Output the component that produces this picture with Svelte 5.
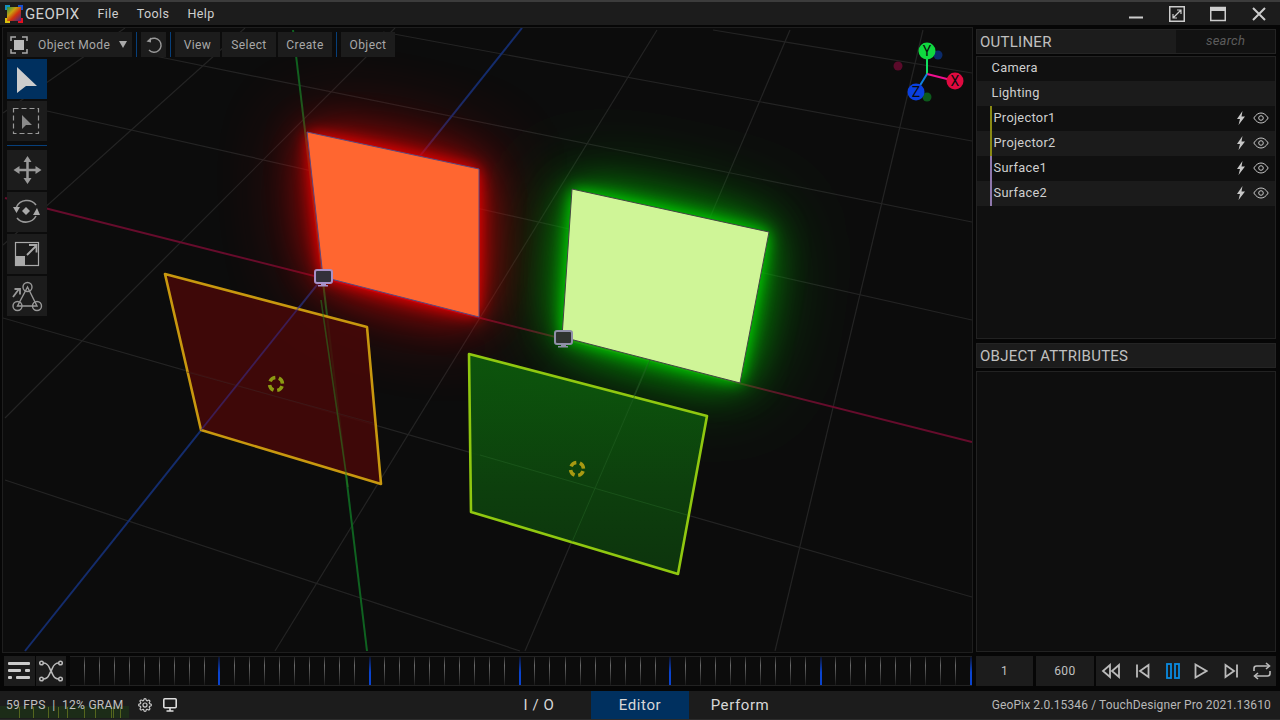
<script>
const gridLines = [
  [713,30,972,73],[383,32,972,141],[150,55,972,222],[47,111,972,320],
  [3,318,972,597],[5,480,520,651],
  [923,30,775,651],[790,30,525,651],[657,30,275,651],[395,28,5,418],[245,28,3,245],[125,28,3,113]
]
const rows = [
  { name: "Camera", group: true },
  { name: "Lighting", group: true },
  { name: "Projector1", bar: "#8a8a14" },
  { name: "Projector2", bar: "#8a8a14" },
  { name: "Surface1", bar: "#8f78ad" },
  { name: "Surface2", bar: "#8f78ad" }
]
const ticks = Array.from({ length: 60 }, (_, i) => i)
const fpsTicks = [19, 33, 48, 58, 67, 84, 95, 111, 113, 120]
</script>

<div class="app">
  <header class="titlebar">
    <svg class="logo" width="18" height="18" viewBox="0 0 18 18">
      <defs>
        <linearGradient id="lg" x1="0" y1="0" x2="1" y2="1">
          <stop offset="0" stop-color="#1f8f4a" />
          <stop offset=".35" stop-color="#c8a010" />
          <stop offset=".6" stop-color="#d03010" />
          <stop offset="1" stop-color="#3a2a8a" />
        </linearGradient>
      </defs>
      <rect x="2" y="2" width="14" height="14" fill="url(#lg)" />
      <path d="M1 5V1h4" fill="none" stroke="#1590c0" stroke-width="2" />
      <path d="M13 1h4v4" fill="none" stroke="#1c50d0" stroke-width="2" />
      <path d="M1 13v4h4" fill="none" stroke="#d8c010" stroke-width="2" />
      <path d="M13 17h4v-4" fill="none" stroke="#e01020" stroke-width="2" />
    </svg>
    <span class="brand">GEOPIX</span>
    <nav class="menu">
      <span>File</span>
      <span>Tools</span>
      <span>Help</span>
    </nav>
    <div class="winbtns">
      <svg width="16" height="16" viewBox="0 0 16 16"><path d="M1 11.500h14" stroke="#ccc" stroke-width="2" /></svg>
      <svg width="16" height="16" viewBox="0 0 16 16" fill="none" stroke="#ccc"><rect x=".75" y=".75" width="14.5" height="14.5" stroke-width="1.5" /><path d="M4 12l8-8M8 4h4v4M4 8v4h4" stroke-width="1.2" /></svg>
      <svg width="16" height="16" viewBox="0 0 16 16" fill="none" stroke="#ccc"><rect x=".75" y="1.5" width="14.5" height="13" stroke-width="1.5" /><path d="M1 3.5h14" stroke-width="3" /></svg>
      <svg width="16" height="16" viewBox="0 0 16 16"><path d="M2 2l12 12M14 2L2 14" stroke="#ccc" stroke-width="2" /></svg>
    </div>
  </header>

  <main class="main">
    <section class="viewport">
      <svg class="scene" viewBox="3 28 969 624" width="969" height="624">
        <defs>
          <filter id="b6" x="-50%" y="-50%" width="200%" height="200%"><feGaussianBlur stdDeviation="8" /></filter>
          <filter id="b18" x="-60%" y="-60%" width="220%" height="220%"><feGaussianBlur stdDeviation="22" /></filter>
          <filter id="b40" x="-100%" y="-100%" width="300%" height="300%"><feGaussianBlur stdDeviation="44" /></filter>
          <linearGradient id="greenFill" x1="0" y1="0" x2="0" y2="1">
            <stop offset="0" stop-color="#0c620c" stop-opacity=".85" />
            <stop offset=".6" stop-color="#0d420d" stop-opacity=".95" />
            <stop offset="1" stop-color="#0d350d" stop-opacity=".97" />
          </linearGradient>
        </defs>
        <rect x="3" y="28" width="969" height="624" fill="#0c0c0c" />

        {#each gridLines as l}
          <line x1={l[0]} y1={l[1]} x2={l[2]} y2={l[3]} stroke="#242424" stroke-width="1.2" />
        {/each}
        <line x1="5" y1="198" x2="972" y2="442" stroke="#660c2c" stroke-width="2" />
        <line x1="522" y1="28" x2="25" y2="651" stroke="#142c6c" stroke-width="2" />
        <line x1="293" y1="30" x2="367" y2="651" stroke="#0f6220" stroke-width="2" />

        <polygon points="307,132 479,169 479,317 323,277" fill="#a00000" opacity=".9" filter="url(#b40)" />
        <polygon points="307,132 479,169 479,317 323,277" fill="#ff0000" opacity=".7" filter="url(#b18)" />
        <polygon points="307,132 479,169 479,317 323,277" fill="#ff0808" filter="url(#b6)" />
        <polygon points="572,189 769,232 740,383 562,337" fill="#007a00" opacity="1" filter="url(#b40)" />
        <polygon points="572,189 769,232 740,383 562,337" fill="#00c000" opacity=".9" filter="url(#b18)" />
        <polygon points="572,189 769,232 740,383 562,337" fill="#10e010" filter="url(#b6)" />

        <polygon points="165,274 367,327 381,484 201,430" fill="#480808" fill-opacity=".85" stroke="#c8980f" stroke-width="2.6" stroke-linejoin="round" />
        <polygon points="469,354 707,416 678,574 471,512" fill="url(#greenFill)" stroke="#90c810" stroke-width="2.6" stroke-linejoin="round" />
        <g opacity=".55">
          <line x1="187" y1="372" x2="373" y2="423" stroke="#3a2222" />
          <line x1="321" y1="300" x2="348" y2="487" stroke="#2a7a20" stroke-width="1.6" />
          <line x1="300" y1="306" x2="201" y2="430" stroke="#3a2a88" stroke-width="1.6" />
          <line x1="480" y1="455" x2="687" y2="515" stroke="#226022" />
          <line x1="650" y1="360" x2="572" y2="542" stroke="#226022" />
        </g>

        <polygon points="307,132 479,169 479,317 323,277" fill="#ff6630" stroke="#5a4a80" stroke-width="1" />
        <polygon points="572,189 769,232 740,383 562,337" fill="#cff597" stroke="#444" stroke-width="1" />

        <circle cx="276" cy="384" r="6.500" fill="none" stroke="#8c9a12" stroke-width="3.500" stroke-dasharray="6.500 3.700" transform="rotate(20 276 384)" />
        <circle cx="577" cy="469" r="6.500" fill="none" stroke="#a89a12" stroke-width="3.500" stroke-dasharray="6.500 3.700" transform="rotate(20 577 469)" />

        <g fill="#a890c8">
          <rect x="315" y="270" width="17" height="13" rx="2" fill="#33303a" stroke="#a890c8" stroke-width="2" />
          <rect x="321" y="283" width="5" height="2" />
          <rect x="318" y="285" width="10" height="1.5" />
        </g>
        <g fill="#8f8fa8">
          <rect x="555" y="331" width="17" height="13" rx="2" fill="#2f3430" stroke="#8f8fa8" stroke-width="2" />
          <rect x="561" y="344" width="5" height="2" />
          <rect x="558" y="346" width="10" height="1.5" />
        </g>

        <circle cx="938" cy="55" r="4.5" fill="#0a2a6a" />
        <circle cx="898" cy="66" r="4.5" fill="#5a0a2a" />
        <circle cx="927" cy="97" r="4.5" fill="#0c5a1c" />
        <line x1="927" y1="74" x2="927" y2="52" stroke="#10e060" stroke-width="2" />
        <line x1="927" y1="74" x2="955" y2="81" stroke="#f01090" stroke-width="2" />
        <line x1="927" y1="74" x2="916" y2="92" stroke="#1080e0" stroke-width="2" />
        <circle cx="927" cy="51" r="8.5" fill="#10d840" />
        <circle cx="955" cy="81" r="8.5" fill="#e00a40" />
        <circle cx="916" cy="92" r="8.5" fill="#0a40e0" />
        <g class="axis-label">
          <text x="927" y="56">Y</text>
          <text x="955" y="86">X</text>
          <text x="916" y="97">Z</text>
        </g>
      </svg>

      <div class="toolbar">
        <div class="tbtn mode">
          <svg width="18" height="18" viewBox="0 0 18 18" fill="none" stroke="#aaa" stroke-width="1.5"><rect x="4" y="4" width="10" height="10" fill="#bbb" stroke="none" /><path d="M1 5V1h5M12 1h5v4M17 13v4h-5M6 17H1v-4" /></svg>
          <span class="mode-label">Object Mode</span>
          <svg width="8" height="7" viewBox="0 0 8 7"><path d="M0 0h8L4 7z" fill="#aaa" /></svg>
        </div>
        <i class="sep"></i>
        <div class="tbtn undo">
          <svg width="18" height="18" viewBox="0 0 18 18" fill="none" stroke="#999" stroke-width="1.4"><path d="M5 3.5a7 7 0 1 1-1 10.5" /><path d="M1.5 5.5L6 1.5v5z" fill="#999" stroke="none" /></svg>
        </div>
        <i class="sep"></i>
        <div class="tbtn view">View</div>
        <div class="tbtn sel">Select</div>
        <div class="tbtn sel">Create</div>
        <i class="sep"></i>
        <div class="tbtn sel">Object</div>
      </div>

      <div class="tools">
        <div class="tool active">
          <svg width="40" height="40" viewBox="0 0 40 40"><path d="M10 8l20 19H19l-9 7z" fill="#ccc" /></svg>
        </div>
        <div class="tool">
          <svg width="40" height="40" viewBox="0 0 40 40"><rect x="6.5" y="7.5" width="25" height="25" fill="none" stroke="#999" stroke-width="1.2" stroke-dasharray="5 3" /><path d="M15 14l10 10h-6l-4 4z" fill="#8a8a8a" /></svg>
        </div>
        <i class="hsep"></i>
        <div class="tool">
          <svg width="40" height="40" viewBox="0 0 40 40" fill="#999"><path d="M20.500 10v20M10 20h21" stroke="#999" stroke-width="2.500" /><path d="M20.500 6l4 6h-8zM20.500 34l4-6h-8zM6.500 20l6-4v8zM34.500 20l-6-4v8z" /></svg>
        </div>
        <div class="tool">
          <svg width="40" height="40" viewBox="0 0 40 40"><path d="M9.500 15A11.500 11.500 0 0 1 29 13M29 24A11.500 11.500 0 0 1 10 26" fill="none" stroke="#999" stroke-width="1.600" /><path d="M19 15l4 4-4 4-4-4zM6 15h7l-3.500 6zM26 23h7l-3-7z" fill="#aaa" /></svg>
        </div>
        <div class="tool">
          <svg width="40" height="40" viewBox="0 0 40 40"><rect x="8.5" y="8.5" width="23" height="23" fill="none" stroke="#aaa" stroke-width="1.2" /><rect x="8" y="22" width="10" height="10" fill="#aaa" /><path d="M20 21l9-9M22 11h7.5v7.5" fill="none" stroke="#aaa" stroke-width="1.8" /></svg>
        </div>
        <div class="tool">
          <svg width="40" height="40" viewBox="0 0 40 40" fill="none" stroke="#999" stroke-width="1.4"><path d="M20.500 11L10.500 30H30z" /><circle cx="20.500" cy="11" r="4.500" /><circle cx="10.500" cy="30" r="4.500" /><circle cx="30" cy="30" r="4.500" /><path d="M6 21l6-8M7.500 13H13v5.500" stroke-width="1.800" /></svg>
        </div>
      </div>
    </section>

    <aside class="side">
      <div class="panel-head">
        <span>OUTLINER</span>
        <span class="search">search</span>
      </div>
      <ul class="tree">
        {#each rows as r}
          <li class="row" class:group={r.group}>
            {#if r.bar}<i class="bar" style="background:{r.bar}"></i>{/if}
            <span class="row-name">{r.name}</span>
            {#if r.bar}
              <svg width="10" height="14" viewBox="0 0 10 14"><path d="M6.500 0L1 8h3L2.500 14 9 5.500H5.500z" fill="#c8c8c8" /></svg>
              <svg width="16" height="12" viewBox="0 0 16 12" fill="none" stroke="#c8c8c8"><path d="M.8 6C3 2.500 5.500 1 8 1s5 1.500 7.200 5C13 9.500 10.500 11 8 11S3 9.500.8 6z" /><circle cx="8" cy="6" r="2.300" /></svg>
            {/if}
          </li>
        {/each}
      </ul>
      <div class="panel-head attr"><span>OBJECT ATTRIBUTES</span></div>
      <div class="attrs"></div>
    </aside>
  </main>

  <section class="timeline">
    <div class="tl-btn">
      <svg width="24" height="18" viewBox="0 0 24 18" fill="#ccc"><rect width="22" height="3" rx="1" /><rect y="7" width="13" height="3" rx="1" /><rect x="17" y="7" width="5" height="3" rx="1" /><rect y="14" width="4" height="3" rx="1" /><rect x="8" y="14" width="14" height="3" rx="1" /></svg>
    </div>
    <div class="tl-btn second">
      <svg width="24" height="22" viewBox="0 0 24 22" fill="none" stroke="#bbb" stroke-width="1.500"><path d="M4 3c6 0 6 5 8 8s2 8 8 8M20 3c-6 0-6 5-8 8s-2 8-8 8" /><circle cx="2.500" cy="3" r="1.800" /><circle cx="21.500" cy="3" r="1.800" /><circle cx="2.500" cy="19" r="1.800" /><circle cx="21.500" cy="19" r="1.800" /></svg>
    </div>
    <div class="ruler">
      {#each ticks as t}
        <div class="slot"><i class="tick" class:major={t % 10 === 9}></i></div>
      {/each}
    </div>
    <div class="field first">1</div>
    <div class="field">600</div>
    <div class="transport">
      <svg width="20" height="16" viewBox="0 0 20 16" fill="none" stroke="#bbb" stroke-width="1.800"><path d="M9 2L2 8l7 6zM18 2l-7 6 7 6z" /></svg>
      <svg width="16" height="16" viewBox="0 0 16 16" fill="none" stroke="#bbb" stroke-width="1.800"><path d="M2 1.500v13M13.500 2L5 8l8.500 6z" /></svg>
      <svg width="14" height="16" viewBox="0 0 14 16" fill="none" stroke="#0a8be0" stroke-width="1.800"><rect x="1" y="1" width="4" height="14" /><rect x="9" y="1" width="4" height="14" /></svg>
      <svg width="14" height="16" viewBox="0 0 14 16" fill="none" stroke="#bbb" stroke-width="1.800"><path d="M1.500 1.500L12.500 8l-11 6.500z" /></svg>
      <svg width="16" height="16" viewBox="0 0 16 16" fill="none" stroke="#bbb" stroke-width="1.800"><path d="M14 1.500v13M2.500 2L11 8l-8.500 6z" /></svg>
      <svg width="18" height="18" viewBox="0 0 18 18" fill="none" stroke="#bbb" stroke-width="1.600"><path d="M1 9V6.500C1 5 2 4 3.500 4H16M17 9v2.500c0 1.500-1 2.500-2.500 2.500H2" /><path d="M13 1l3.500 3L13 7M5 11l-3.500 3L5 17" /></svg>
    </div>
  </section>

  <footer class="status">
    <div class="status-left">
      <div class="stats">
        <div class="graph">
          {#each fpsTicks as x}<i style="left:{x}px"></i>{/each}
        </div>
        <span class="stats-text">59 FPS &nbsp;|&nbsp; 12% GRAM</span>
      </div>
      <svg width="14" height="14" viewBox="0 0 24 24" fill="none" stroke="#ccc" stroke-width="2"><circle cx="12" cy="12" r="3.500" /><path d="M19.400 15a1.700 1.700 0 0 0 .3 1.800l.1.100a2 2 0 1 1-2.900 2.900l-.1-.1a1.700 1.700 0 0 0-2.800 1.200v.100a2 2 0 1 1-4 0V21a1.700 1.700 0 0 0-2.900-1.200l-.1.100a2 2 0 1 1-2.800-2.900l.1-.1A1.700 1.700 0 0 0 3 14H3a2 2 0 1 1 0-4h.1a1.700 1.700 0 0 0 1.200-2.900l-.1-.1A2 2 0 1 1 7 4.200l.1.100a1.700 1.700 0 0 0 2.900-1.200V3a2 2 0 1 1 4 0v.1a1.700 1.700 0 0 0 2.900 1.200l.1-.1a2 2 0 1 1 2.800 2.900l-.1.100a1.700 1.700 0 0 0 1.200 2.800h.1a2 2 0 1 1 0 4h-.1a1.700 1.700 0 0 0-1.500 1z" /></svg>
      <svg class="mon" width="14" height="14" viewBox="0 0 14 14" fill="none" stroke="#ddd" stroke-width="1.600"><rect x=".8" y=".8" width="12.400" height="9" rx="1" /><path d="M7 10v3M3.500 13h7" /></svg>
    </div>
    <div class="tab io">I / O</div>
    <div class="tab editor">Editor</div>
    <div class="tab perform">Perform</div>
    <div class="version">GeoPix 2.0.15346 / TouchDesigner Pro 2021.13610</div>
  </footer>
</div>

<style>
  :global(body) {
    background: #000;
  }
  .app {
    width: 1280px;
    height: 720px;
    display: flex;
    flex-direction: column;
    background: #060606;
    font-family: Roboto, "Liberation Sans", sans-serif;
    color: #c8c8c8;
    overflow: hidden;
  }
  .titlebar {
    height: 25px;
    flex: none;
    box-sizing: border-box;
    border-top: 2px solid #3c3c3c;
    background: #1c1c1c;
    display: flex;
    align-items: center;
    padding-left: 5px;
  }
  .logo {
    margin-right: 2px;
  }
  .brand {
    font-size: 15px;
    letter-spacing: 0.4px;
    color: #d0d0d0;
  }
  .menu {
    display: flex;
    gap: 18px;
    margin-left: 18px;
    font-size: 12.5px;
    letter-spacing: 0.4px;
    color: #cfcfcf;
  }
  .winbtns {
    margin-left: auto;
    display: flex;
    gap: 25px;
    padding-right: 13px;
  }
  .main {
    height: 624px;
    margin-top: 3px;
    flex: none;
    display: flex;
    padding-left: 3px;
  }
  .viewport {
    position: relative;
    width: 969px;
    height: 624px;
    outline: 1px solid #1e1e1e;
  }
  .scene {
    display: block;
  }
  .axis-label text {
    font-size: 14px;
    text-anchor: middle;
    fill: #0a0a0a;
  }
  .toolbar {
    position: absolute;
    left: 4px;
    top: 4px;
    display: flex;
    height: 25px;
    gap: 2px;
    font-size: 12px;
    letter-spacing: 0.4px;
    color: #a8a8a8;
  }
  .tbtn {
    background: #1c1c1c;
    display: flex;
    align-items: center;
    justify-content: center;
    height: 25px;
  }
  .mode {
    width: 125px;
    justify-content: flex-start;
    padding-left: 3px;
    box-sizing: border-box;
  }
  .mode-label {
    margin-left: 10px;
    margin-right: 9px;
  }
  .undo {
    width: 25px;
  }
  .view {
    width: 45px;
  }
  .sel {
    width: 54px;
  }
  .sep {
    width: 1px;
    margin: 0 2px;
    background: #073f7a;
  }
  .tools {
    position: absolute;
    left: 4px;
    top: 31px;
    display: flex;
    flex-direction: column;
    gap: 2px;
    width: 40px;
  }
  .tool {
    width: 40px;
    height: 40px;
    background: #1c1c1c;
  }
  .tool svg {
    display: block;
  }
  .tool.active {
    background: #00305f;
  }
  .hsep {
    height: 1px;
    background: #073f7a;
    margin: 2px 0;
  }
  .side {
    width: 300px;
    margin-left: 4px;
    display: flex;
    flex-direction: column;
  }
  .panel-head {
    height: 25px;
    margin-top: 1px;
    flex: none;
    box-sizing: border-box;
    border: 1px solid #242424;
    background: #1c1c1c;
    display: flex;
    align-items: center;
    justify-content: space-between;
    padding-left: 3px;
    font-size: 15px;
    letter-spacing: 0.25px;
    color: #c0c0c0;
  }
  .search {
    width: 99px;
    height: 23px;
    line-height: 22px;
    background: #121212;
    font-size: 13px;
    font-style: italic;
    color: #5c5c5c;
    text-align: center;
    box-sizing: border-box;
  }
  .tree {
    list-style: none;
    margin: 2px 0 0;
    padding: 0;
    height: 283px;
    flex: none;
    box-sizing: border-box;
    border: 1px solid #222;
    background: #101010;
  }
  .row {
    height: 25px;
    box-sizing: border-box;
    display: flex;
    align-items: center;
    font-size: 12.8px;
    letter-spacing: 0.3px;
    color: #cfcfcf;
    padding: 0 6px 2px 14.500px;
    position: relative;
    gap: 7px;
  }
  .row:nth-child(even) {
    background: #1b1b1b;
  }
  .row:first-child {
    height: 24px;
    padding-bottom: 4px;
  }
  .bar {
    position: absolute;
    left: 13px;
    top: 0;
    bottom: 0;
    width: 2px;
  }
  .row-name {
    margin-right: auto;
    margin-left: 2px;
  }
  .group .row-name {
    margin-left: 0;
  }
  .attr {
    margin-top: 4px;
  }
  .attrs {
    margin-top: 3px;
    flex: 1;
    box-sizing: border-box;
    border: 1px solid #222;
    background: #0e0e0e;
  }
  .timeline {
    height: 30px;
    margin-top: 4px;
    flex: none;
    display: flex;
    align-items: stretch;
    padding-left: 4px;
  }
  .tl-btn {
    width: 31px;
    background: #1c1c1c;
    display: flex;
    align-items: center;
    justify-content: center;
  }
  .tl-btn.second {
    width: 30px;
    margin-left: 1px;
  }
  .ruler {
    width: 902px;
    margin-left: 4px;
    box-sizing: border-box;
    border-top: 1px solid #222;
    border-bottom: 1px solid #222;
    background: #0c0c0c;
    display: flex;
    padding-left: 13.500px;
    overflow: hidden;
  }
  .slot {
    width: 15.040px;
    flex: none;
  }
  .tick {
    display: block;
    width: 1px;
    height: 100%;
    background: linear-gradient(#242424, #6a6a6a 30%, #181818);
  }
  .tick.major {
    width: 2px;
    margin-left: -0.500px;
    background: linear-gradient(#0c1430, #0a44d0 55%, #0a44d0);
  }
  .field {
    width: 58px;
    margin-left: 3px;
    background: #1c1c1c;
    display: flex;
    align-items: center;
    justify-content: center;
    font-size: 12px;
    letter-spacing: 0.5px;
    color: #c0c0c0;
  }
  .field.first {
    width: 57px;
    margin-left: 4px;
  }
  .transport {
    width: 180px;
    margin-left: 2px;
    background: #1c1c1c;
    display: flex;
    align-items: center;
    justify-content: space-between;
    padding: 0 5px 0 5px;
    box-sizing: border-box;
  }
  .status {
    height: 29px;
    margin-top: 5px;
    flex: none;
    box-sizing: border-box;
    border-bottom: 1px solid #2c2c2c;
    background: #1c1c1c;
    display: flex;
    align-items: center;
  }
  .status-left {
    width: 490px;
    display: flex;
    align-items: center;
  }
  .stats {
    position: relative;
    width: 138px;
    height: 28px;
    display: flex;
    align-items: center;
    padding-left: 6px;
    box-sizing: border-box;
    font-size: 12px;
    letter-spacing: 0.3px;
    color: #c0c0c0;
  }
  .stats-text {
    position: relative;
    white-space: nowrap;
  }
  .graph {
    position: absolute;
    left: 0;
    bottom: 1px;
    width: 129px;
    height: 12px;
    background: #1c2c18;
  }
  .graph i {
    position: absolute;
    bottom: 0;
    width: 1px;
    height: 11px;
    background: #55651e;
  }
  .mon {
    margin-left: 11px;
  }
  .tab {
    height: 28px;
    display: flex;
    align-items: center;
    justify-content: center;
    font-size: 15px;
    letter-spacing: 0.6px;
    color: #d8d8d8;
  }
  .io {
    width: 101px;
    padding-right: 3px;
    box-sizing: border-box;
  }
  .editor {
    width: 98px;
    background: #00305f;
  }
  .perform {
    width: 102px;
  }
  .version {
    flex: 1;
    text-align: right;
    padding-right: 9px;
    font-size: 12px;
    letter-spacing: 0.13px;
    color: #b8b8b8;
    white-space: nowrap;
  }
</style>
